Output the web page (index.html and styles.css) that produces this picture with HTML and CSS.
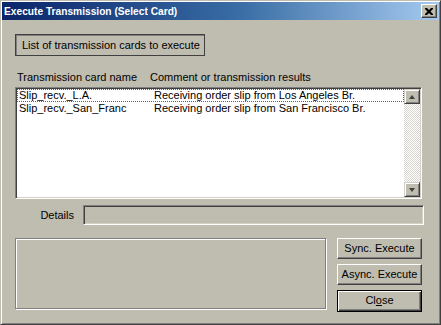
FILE: index.html
```html
<!DOCTYPE html>
<html>
<head>
  <meta charset="UTF-8">
  <title>Execute Transmission (Select Card)</title>
  <link rel="stylesheet" href="styles.css">
</head>
<body>
  <div class="window">
    <div class="titlebar">
      <span class="title">Execute Transmission (Select Card)</span>
      <span class="close-box">
        <svg width="8" height="7" viewBox="0 0 8 7"><path d="M0 0h2l2 2 2-2h2v1l-2.5 2.5 2.5 2.5v1h-2l-2-2-2 2h-2v-1l2.5-2.5-2.5-2.5z" fill="#000"/></svg>
      </span>
    </div>

    <div class="client">
      <div class="caption-box">List of transmission cards to execute</div>

      <div class="col-heads">
        <span class="col-name">Transmission card name</span>
        <span>Comment or transmission results</span>
      </div>

      <div class="listbox">
        <div class="rows">
          <div class="row focused">
            <span class="cell-name">Slip_recv._L.A.</span>
            <span>Receiving order slip from Los Angeles Br.</span>
          </div>
          <div class="row">
            <span class="cell-name">Slip_recv._San_Franc</span>
            <span>Receiving order slip from San Francisco Br.</span>
          </div>
        </div>
        <div class="scrollbar">
          <div class="sb-btn"><span class="arrow-up"></span></div>
          <div class="sb-track"></div>
          <div class="sb-btn"><span class="arrow-down"></span></div>
        </div>
      </div>

      <div class="details-row">
        <span class="details-label">Details</span>
        <div class="details-field"></div>
      </div>

      <div class="bottom">
        <div class="log-panel"></div>
        <div class="buttons">
          <div class="btn">Sync. Execute</div>
          <div class="btn">Async. Execute</div>
          <div class="btn default">Cl<u>o</u>se</div>
        </div>
      </div>
    </div>
  </div>
</body>
</html>
```

FILE: styles.css
```css
body {
  margin: 0;
  font-family: "Liberation Sans", Arial, sans-serif;
  font-size: 11px;
  color: #000;
}

.window {
  box-sizing: border-box;
  width: 441px;
  height: 325px;
  background-color: #bfbcb0;
  border: 1px solid;
  border-color: #bfbcb0 #404040 #404040 #bfbcb0;
  box-shadow: inset 1px 1px #ffffff, inset -1px -1px #808080;
  padding: 1px;
  white-space: nowrap;
}

.titlebar {
  height: 18px;
  display: flex;
  align-items: center;
  justify-content: space-between;
  padding: 0 2px 0 2px;
  background: linear-gradient(to right, #0a246a 0%, #3a6ea5 55%, #a6caf0 100%);
}

.title {
  color: #ffffff;
  font-weight: bold;
  font-size: 10.2px;
}

.close-box {
  box-sizing: border-box;
  width: 16px;
  height: 14px;
  display: flex;
  align-items: center;
  justify-content: center;
  background-color: #bfbcb0;
  border: 1px solid;
  border-color: #ffffff #404040 #404040 #ffffff;
  box-shadow: inset -1px -1px #808080;
}

.client {
  padding: 14px 0 0 13px;
}

.caption-box {
  box-sizing: border-box;
  width: 190px;
  height: 22px;
  line-height: 20px;
  padding-left: 6px;
  border: 1px solid #404040;
  box-shadow: inset 1px 1px #808080;
}

.col-heads {
  display: flex;
  margin-top: 14px;
  padding-left: 2px;
  height: 14px;
  line-height: 14px;
}

.col-name {
  width: 133px;
}

.listbox {
  box-sizing: border-box;
  display: flex;
  width: 407px;
  height: 112px;
  margin-top: 3px;
  background-color: #ffffff;
  border: 1px solid;
  border-color: #808080 #ffffff #ffffff #808080;
  box-shadow: inset 1px 1px #404040, inset -1px -1px #d4d0c8;
  padding: 1px;
}

.rows {
  flex: 1;
}

.row {
  display: flex;
  height: 11px;
  line-height: 11px;
  padding-left: 1px;
  border: 1px dotted transparent;
}

.row.focused {
  border-color: #606060;
}

.cell-name {
  width: 135px;
}

.scrollbar {
  width: 16px;
  display: flex;
  flex-direction: column;
}

.sb-btn {
  box-sizing: border-box;
  height: 15px;
  display: flex;
  align-items: center;
  justify-content: center;
  background-color: #bfbcb0;
  border: 1px solid;
  border-color: #d4d0c8 #404040 #404040 #d4d0c8;
  box-shadow: inset 1px 1px #ffffff, inset -1px -1px #808080;
}

.sb-track {
  flex: 1;
  background-color: #e8e6e0;
  background-image: repeating-conic-gradient(#ffffff 0 25%, #d8d6ce 0 50%);
  background-size: 2px 2px;
}

.arrow-up {
  width: 0;
  height: 0;
  border-left: 3px solid transparent;
  border-right: 3px solid transparent;
  border-bottom: 4px solid #404040;
}

.arrow-down {
  width: 0;
  height: 0;
  border-left: 3px solid transparent;
  border-right: 3px solid transparent;
  border-top: 4px solid #404040;
}

.details-row {
  display: flex;
  align-items: center;
  margin-top: 6px;
}

.details-label {
  box-sizing: border-box;
  width: 68px;
  text-align: right;
  padding-right: 9px;
}

.details-field {
  box-sizing: border-box;
  width: 341px;
  height: 20px;
  border: 1px solid;
  border-color: #808080 #ffffff #ffffff #808080;
  box-shadow: inset 1px 1px #404040, inset -1px -1px #d4d0c8;
}

.bottom {
  display: flex;
  margin-top: 13px;
}

.log-panel {
  box-sizing: border-box;
  width: 311px;
  height: 71px;
  border: 1px solid #808080;
  box-shadow: inset 1px 1px #ffffff, 1px 1px #ffffff;
}

.buttons {
  display: flex;
  flex-direction: column;
  gap: 5px;
  margin-left: 11px;
}

.btn {
  box-sizing: border-box;
  width: 85px;
  height: 21px;
  line-height: 19px;
  text-align: center;
  border: 1px solid;
  border-color: #ffffff #404040 #404040 #ffffff;
  box-shadow: inset -1px -1px #808080;
}

.btn.default {
  height: 22px;
  line-height: 18px;
  border: 1px solid #000000;
  box-shadow: inset 1px 1px #ffffff, inset -1px -1px #404040, inset -2px -2px #808080;
}
```
